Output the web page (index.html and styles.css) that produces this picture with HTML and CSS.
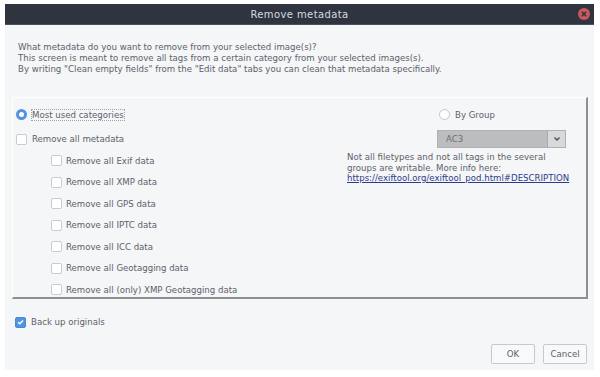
FILE: index.html
```html
<!DOCTYPE html>
<html lang="en">
<head>
  <meta charset="UTF-8">
  <meta name="viewport" content="width=device-width, initial-scale=1.0">
  <title>Remove metadata</title>
  <link rel="stylesheet" href="styles.css">
</head>
<body>
<div class="window">
  <div class="titlebar">
    <span></span>
    <span class="title">Remove metadata</span>
    <span class="close">
      <svg width="12" height="12" viewBox="0 0 12 12">
        <circle cx="6" cy="6" r="6" fill="#cc575d"/>
        <path d="M3.8 3.8 L8.2 8.2 M8.2 3.8 L3.8 8.2" stroke="#2f343f" stroke-width="1.5"/>
      </svg>
    </span>
  </div>

  <div class="intro">
    <p>What metadata do you want to remove from your selected image(s)?</p>
    <p>This screen is meant to remove all tags from a certain category from your selected images(s).</p>
    <p>By writing "Clean empty fields" from the "Edit data" tabs you can clean that metadata specifically.</p>
  </div>

  <div class="groupbox">
    <div class="leftcol">
      <div class="row top">
        <span class="radio checked"></span>
        <span class="focus">Most used categories</span>
      </div>
      <div class="row main">
        <span class="check"></span>
        <span>Remove all metadata</span>
      </div>
      <div class="sub">
        <div class="row"><span class="check"></span><span>Remove all Exif data</span></div>
        <div class="row"><span class="check"></span><span>Remove all XMP data</span></div>
        <div class="row"><span class="check"></span><span>Remove all GPS data</span></div>
        <div class="row"><span class="check"></span><span>Remove all IPTC data</span></div>
        <div class="row"><span class="check"></span><span>Remove all ICC data</span></div>
        <div class="row"><span class="check"></span><span>Remove all Geotagging data</span></div>
        <div class="row"><span class="check"></span><span>Remove all (only) XMP Geotagging data</span></div>
      </div>
    </div>
    <div class="rightcol">
      <div class="row top bygroup">
        <span class="radio"></span>
        <span>By Group</span>
      </div>
      <div class="combo">
        <span class="combo-value">AC3</span>
        <span class="combo-btn">
          <svg width="8" height="6" viewBox="0 0 8 6">
            <path d="M1.5 1.5 L4 4 L6.5 1.5" fill="none" stroke="#4a4f5a" stroke-width="1.4"/>
          </svg>
        </span>
      </div>
      <div class="info">
        <p>Not all filetypes and not all tags in the several</p>
        <p>groups are writable. More info here:</p>
        <p><a href="#">https://exiftool.org/exiftool_pod.html#DESCRIPTION</a></p>
      </div>
    </div>
  </div>

  <div class="row backup">
    <span class="check checked">
      <svg width="10" height="10" viewBox="0 0 10 10">
        <path d="M2.3 5.2 L4.2 7 L7.8 3.2" fill="none" stroke="#fff" stroke-width="1.6"/>
      </svg>
    </span>
    <span>Back up originals</span>
  </div>

  <div class="buttons">
    <button class="btn">OK</button>
    <button class="btn">Cancel</button>
  </div>
</div>
</body>
</html>
```

FILE: styles.css
```css
* {
  margin: 0;
  padding: 0;
  box-sizing: border-box;
}
body {
  background: #ffffff;
  font-family: "DejaVu Sans", sans-serif;
  font-size: 8.6px;
  color: #5c616c;
}
.window {
  margin: 4px 0 0 5px;
  width: 589px;
  height: 366px;
  background: #f5f6f7;
  display: flex;
  flex-direction: column;
}
.titlebar {
  height: 21px;
  flex: none;
  background: #2f343f;
  border-bottom: 1px solid #4b5162;
  display: grid;
  grid-template-columns: 40px 1fr 40px;
  align-items: center;
}
.title {
  text-align: center;
  color: #d3dae3;
  font-size: 10px;
  letter-spacing: 0.4px;
}
.close {
  display: flex;
  justify-content: flex-end;
  padding-right: 4px;
}
.close svg {
  display: block;
}
.intro {
  padding: 17px 0 0 13px;
  line-height: 11px;
  height: 72px;
  flex: none;
}
.groupbox {
  margin: 0 6px 0 7px;
  height: 202px;
  flex: none;
  border-top: 1px solid #ffffff;
  border-left: 1px solid #ffffff;
  border-right: 2px solid #8d8f93;
  border-bottom: 2px solid #8d8f93;
  display: grid;
  grid-template-columns: 334px 1fr;
}
.row {
  display: flex;
  align-items: center;
  gap: 5px;
  height: 21.5px;
}
.leftcol {
  padding: 5px 0 0 3px;
}
.leftcol .top {
  height: 23px;
}
.leftcol .main {
  height: 24px;
  padding-top: 2px;
}
.sub {
  padding-left: 35px;
}
.sub .row {
  gap: 4px;
}
.radio {
  width: 11px;
  height: 11px;
  border-radius: 50%;
  border: 1px solid #c3c6cb;
  background: #ffffff;
  flex: none;
}
.radio.checked {
  border: 3px solid #5294e2;
  background: #ffffff;
}
.focus {
  outline: 1px dotted #a0a4ab;
  outline-offset: 0;
}
.check {
  width: 11px;
  height: 11px;
  border: 1px solid #c8cbd0;
  border-radius: 2px;
  background: #ffffff;
  flex: none;
  display: flex;
  align-items: center;
  justify-content: center;
}
.check.checked {
  background: #5294e2;
  border-color: #4a88d4;
}
.check svg {
  display: block;
}
.rightcol {
  padding: 5px 0 0 0;
}
.bygroup {
  padding-left: 92px;
  height: 23px;
}
.combo {
  margin: 4px 0 0 90px;
  width: 129px;
  height: 18px;
  display: flex;
  border: 1px solid #b0b1b4;
  background: #bcbdbf;
}
.combo-value {
  flex: 1;
  padding-left: 8px;
  line-height: 16px;
  color: #6a6e76;
}
.combo-btn {
  width: 18px;
  background: #d8d9db;
  border-left: 1px solid #a9aaad;
  display: flex;
  align-items: center;
  justify-content: center;
}
.info {
  padding-top: 4px;
  line-height: 10.5px;
}
.info a {
  color: #2d3a8c;
  text-decoration: underline;
}
.backup {
  margin: 13px 0 0 10px;
  height: 20px;
}
.buttons {
  display: flex;
  justify-content: flex-end;
  gap: 8px;
  padding: 12px 7px 0 0;
}
.btn {
  width: 44px;
  height: 20px;
  background: #f8f9fa;
  border: 1px solid #c6c9cd;
  border-radius: 2px;
  font-family: "DejaVu Sans", sans-serif;
  font-size: 8.6px;
  color: #5c616c;
}
```
